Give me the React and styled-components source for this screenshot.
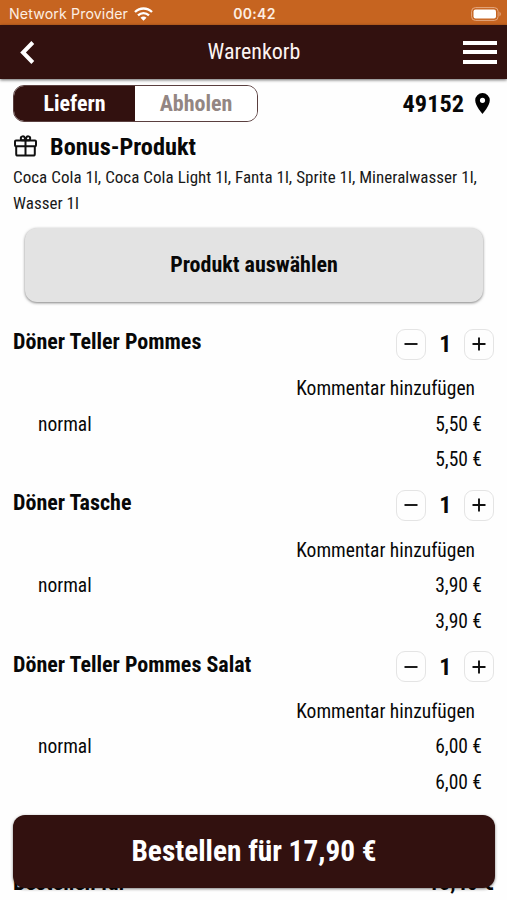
import React from "react";
import styled, { createGlobalStyle } from "styled-components";

const Global = createGlobalStyle`
  * { box-sizing: border-box; }
  html, body { margin: 0; height: 900px; overflow: hidden; background: #fefefe; }
  button { appearance: none; border: 0; padding: 0; margin: 0; color: inherit; background: none; font: inherit; }
`;

const Screen = styled.div`
  position: relative;
  width: 507px;
  height: 900px;
  overflow: hidden;
  display: flex;
  flex-direction: column;
  color: #080808;
  background: #fefefe;
  font-family: "Roboto Condensed", Roboto, sans-serif;
  font-stretch: 75%;
`;

const Label = styled.span`
  display: block;
  flex: none;
  white-space: nowrap;
  font-size: ${(p) => p.$size}px;
  font-weight: ${(p) => p.$weight || 400};
  line-height: ${(p) => p.$line || 24}px;
  letter-spacing: ${(p) => p.$track || 0}px;
`;

const StatusBar = styled.header`
  flex: none;
  height: 25px;
  padding: 2px 7px 0 9px;
  display: grid;
  grid-template-columns: 1fr auto 1fr;
  align-items: center;
  color: #fdeee2;
  background: #c66420;
  font-family: Inter, sans-serif;
  font-stretch: 100%;
`;

const Carrier = styled.div`
  display: flex;
  align-items: center;
  gap: 6px;
`;

const Battery = styled.svg`
  justify-self: end;
  display: block;
  margin-right: -2px;
`;

const TitleBar = styled.nav`
  flex: none;
  height: 54px;
  padding: 0 10px 0 20px;
  display: grid;
  grid-template-columns: 187.5px 1fr auto;
  align-items: center;
  color: #fdf4f2;
  background: #32110f;
  box-shadow: 0 1px 3px rgba(0, 0, 0, 0.6);
`;

const Burger = styled.button`
  justify-self: end;
  width: 34px;
  height: 23px;
  display: flex;
  flex-direction: column;
  justify-content: space-between;
`;

const BurgerLine = styled.span`
  height: 4px;
  background: #fff;
`;

const DeliveryRow = styled.section`
  flex: none;
  height: 37px;
  margin: 6px 17px 0 13px;
  display: flex;
  justify-content: space-between;
  align-items: center;
`;

const Segments = styled.div`
  width: 245px;
  height: 37px;
  display: flex;
  overflow: hidden;
  border: 1px solid #5a3f3f;
  border-radius: 11px;
`;

const Segment = styled.button`
  width: ${(p) => (p.$active ? 121 : 122)}px;
  display: flex;
  justify-content: center;
  align-items: center;
  color: ${(p) => (p.$active ? "#fff" : "#938683")};
  background: ${(p) => (p.$active ? "#32110f" : "#fff")};
`;

const PostalCode = styled.div`
  display: flex;
  align-items: center;
  gap: 11px;
`;

const BonusHeading = styled.div`
  flex: none;
  height: 24px;
  margin: 12px 13px 0;
  display: flex;
  align-items: center;
  gap: 12px;
`;

const BonusText = styled.p`
  flex: none;
  margin: 7px 13px 0;
  font-size: 17px;
  line-height: 25.5px;
  letter-spacing: 0.03px;
  color: #181818;
`;

const SelectButton = styled.button`
  flex: none;
  height: 74px;
  margin: 12px 24px 0 25px;
  display: flex;
  justify-content: center;
  align-items: center;
  border-radius: 12px;
  background: #e3e3e3;
  box-shadow: 0 1px 3px rgba(0, 0, 0, 0.5);
`;

const Items = styled.ul`
  flex: none;
  list-style: none;
  margin: 26px 12.5px 0 13px;
  padding: 0;
`;

const Item = styled.li`
  height: 161.3px;
`;

const ItemHead = styled.div`
  height: 32px;
  display: flex;
  justify-content: space-between;
  align-items: flex-start;
`;

const Stepper = styled.div`
  display: flex;
  align-items: center;
  width: 98.5px;
  height: 32px;
  justify-content: space-between;
`;

const StepButton = styled.button`
  width: 30px;
  height: 31px;
  display: grid;
  place-items: center;
  border: 1px solid #e4e4e4;
  border-radius: 9px;
`;

const Comment = styled.div`
  height: 35.5px;
  margin: 17.4px 19.5px 0 0;
  display: flex;
  justify-content: flex-end;
`;

const PriceLine = styled.div`
  height: 35.5px;
  padding: 0 12.5px 0 25px;
  display: flex;
  justify-content: space-between;
`;

const TotalLine = styled.div`
  position: absolute;
  left: 13px;
  right: 13px;
  top: 871px;
  display: flex;
  justify-content: space-between;
`;

const OrderButton = styled.button`
  position: absolute;
  left: 13px;
  right: 12px;
  top: 815px;
  height: 73px;
  padding-bottom: 2px;
  display: flex;
  justify-content: center;
  align-items: center;
  color: #fff;
  background: #32110f;
  border-radius: 12px;
  box-shadow: 0 1px 3px rgba(0, 0, 0, 0.5);
`;

const Icon = styled.svg`
  display: block;
  flex: none;
`;

const items = [
  { name: "Döner Teller Pommes", price: "5,50 €" },
  { name: "Döner Tasche", price: "3,90 €" },
  { name: "Döner Teller Pommes Salat", price: "6,00 €" },
];

function WifiIcon() {
  return (
    <Icon width="19" height="14" viewBox="0 0 19 14" fill="none" stroke="#fff" strokeWidth="2.3">
      <path d="M1 5C5.8.3 13.2.3 18 5" />
      <path d="M4 8.3c3.2-3 7.8-3 11 0" />
      <path d="M6.5 10.7c1.8-1.5 4.2-1.5 6 0l-3 3z" fill="#fff" stroke="none" />
    </Icon>
  );
}

function GiftIcon() {
  return (
    <Icon width="25" height="24" viewBox="0 0 25 24" fill="none" stroke="#111" strokeWidth="2">
      <rect x="2" y="6.5" width="21" height="5.8" rx="1" />
      <path d="M3.2 12.3V20q0 1.6 1.6 1.6h15.4q1.6 0 1.6-1.6v-7.7M12.5 6.5v15" />
      <path d="M12.5 6.3H9.8a2 2 0 1 1 1.9-2.7zM12.5 6.3h2.7a2 2 0 1 0-1.9-2.7z" />
    </Icon>
  );
}

function Step({ plus }) {
  return (
    <StepButton aria-label={plus ? "+" : "−"}>
      <Icon width="14" height="14" viewBox="0 0 14 14" stroke="#111" strokeWidth="1.9">
        <path d={plus ? "M.5 7h13M7 .5v13" : "M.5 7h13"} />
      </Icon>
    </StepButton>
  );
}

export default function App() {
  return (
    <>
      <Global />
      <Screen>
        <StatusBar>
          <Carrier>
            <Label $size={14.2} $line={20} $track={0.12}>Network Provider</Label>
            <WifiIcon />
          </Carrier>
          <Label $size={14} $weight={600} $line={20} $track={0.3}>00:42</Label>
          <Battery width="31" height="14" viewBox="0 0 31 14">
            <rect x=".6" y=".6" width="26.5" height="12.8" rx="3.8" fill="none" stroke="#e5a981" />
            <rect x="2.5" y="2.5" width="22.5" height="9" rx="2" fill="#fff" />
            <path d="M28.5 4.5q2.6 2.5 0 5z" fill="#e5a981" />
          </Battery>
        </StatusBar>
        <TitleBar>
          <Icon width="15" height="23" viewBox="0 0 15 23" fill="none" stroke="#fff" strokeWidth="4">
            <path d="M12.8 1.5 3 11.5l9.8 10" />
          </Icon>
          <Label $size={22}>Warenkorb</Label>
          <Burger aria-label="Menü">
            <BurgerLine /><BurgerLine /><BurgerLine />
          </Burger>
        </TitleBar>
        <DeliveryRow>
          <Segments>
            <Segment $active><Label $size={22} $weight={700}>Liefern</Label></Segment>
            <Segment><Label $size={22} $weight={700}>Abholen</Label></Segment>
          </Segments>
          <PostalCode>
            <Label $size={24.3} $weight={700}>49152</Label>
            <Icon width="15" height="21" viewBox="0 0 15 21">
              <path fillRule="evenodd" d="M7.5 0A7.3 7.3 0 0 0 .2 7.3C.2 12.7 7.5 21 7.5 21s7.3-8.3 7.3-13.7A7.3 7.3 0 0 0 7.5 0m0 4.7a2.6 2.6 0 1 1 0 5.2 2.6 2.6 0 0 1 0-5.2" />
            </Icon>
          </PostalCode>
        </DeliveryRow>
        <BonusHeading>
          <GiftIcon />
          <Label $size={24.3} $weight={700} $line={25}>Bonus-Produkt</Label>
        </BonusHeading>
        <BonusText>Coca Cola 1l, Coca Cola Light 1l, Fanta 1l, Sprite 1l, Mineralwasser 1l, Wasser 1l</BonusText>
        <SelectButton><Label $size={22} $weight={700}>Produkt auswählen</Label></SelectButton>
        <Items>
          {items.map((item) => (
            <Item key={item.name}>
              <ItemHead>
                <Label $size={22} $weight={700} $line={28}>{item.name}</Label>
                <Stepper>
                  <Step />
                  <Label $size={24} $weight={700}>1</Label>
                  <Step plus />
                </Stepper>
              </ItemHead>
              <Comment><Label $size={19.5}>Kommentar hinzufügen</Label></Comment>
              <PriceLine>
                <Label $size={19.5}>normal</Label>
                <Label $size={19.5}>{item.price}</Label>
              </PriceLine>
              <PriceLine>
                <span />
                <Label $size={19.5}>{item.price}</Label>
              </PriceLine>
            </Item>
          ))}
        </Items>
        <TotalLine>
          <Label $size={22} $weight={700}>Bestellen für</Label>
          <Label $size={22} $weight={700}>15,40 €</Label>
        </TotalLine>
        <OrderButton><Label $size={29.3} $weight={700} $line={34}>Bestellen für 17,90 €</Label></OrderButton>
      </Screen>
    </>
  );
}
